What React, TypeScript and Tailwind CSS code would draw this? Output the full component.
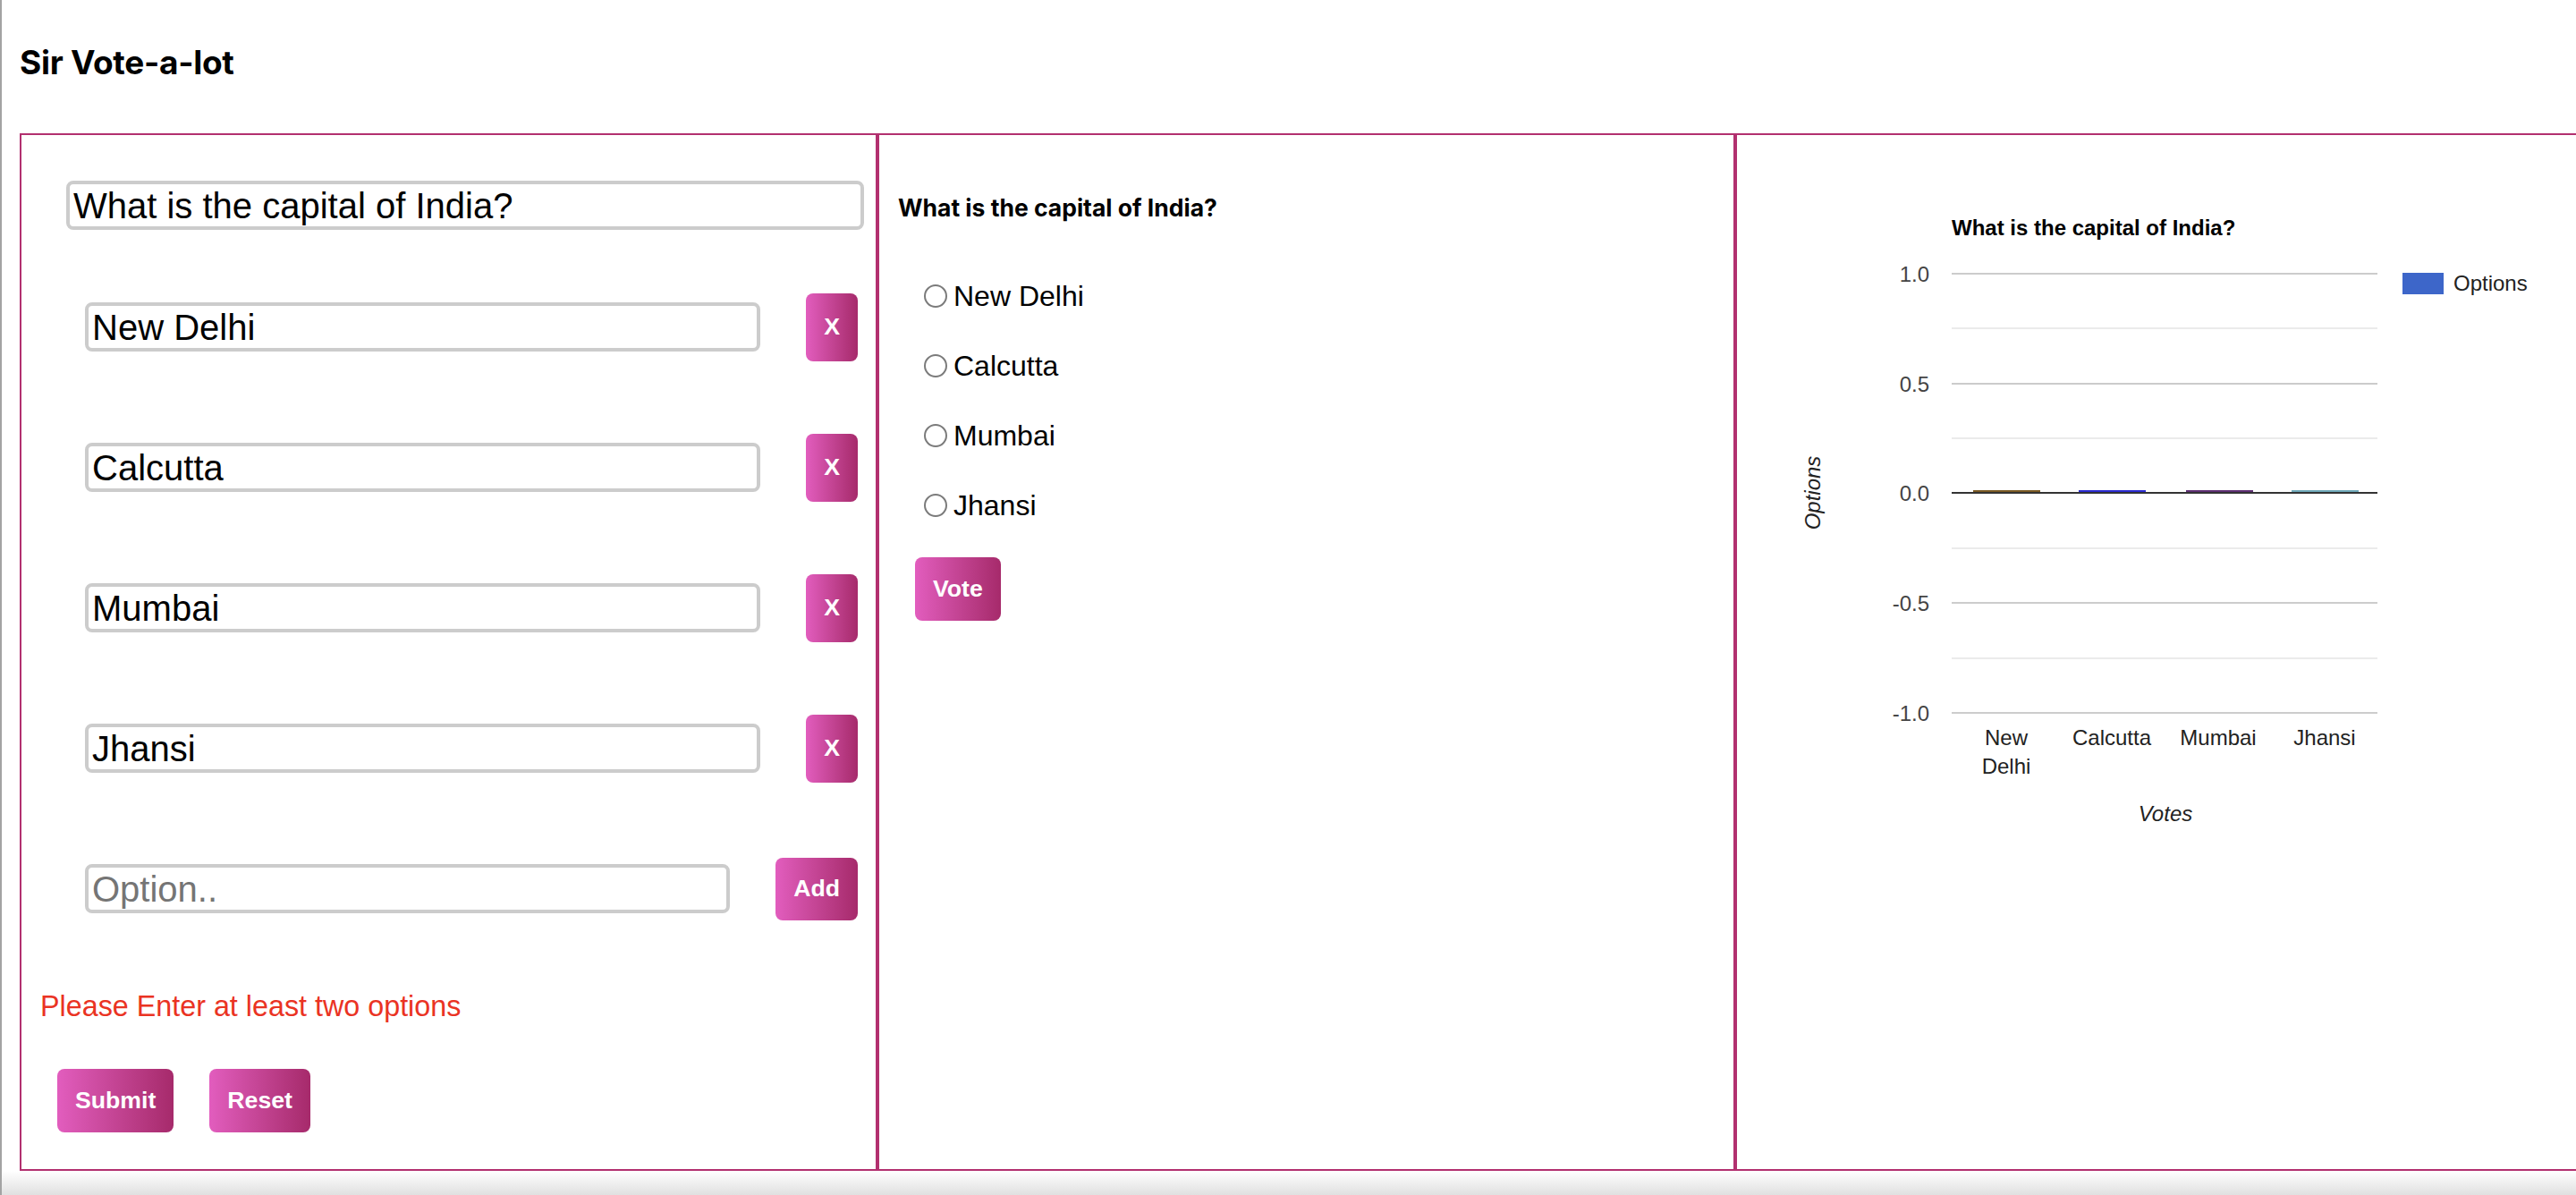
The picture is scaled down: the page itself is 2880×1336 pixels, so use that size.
import React from "react";

const options = ["New Delhi", "Calcutta", "Mumbai", "Jhansi"];

const sans = "font-['Liberation_Sans',Arial,Helvetica,sans-serif]";
const ui = "font-['Inter','Noto_Sans',sans-serif]";

const btn =
  "shrink-0 px-[20px] rounded-[8px] bg-linear-to-r from-[#e25dbe] to-[#a62a6b] text-white font-bold text-[26.67px] leading-[31px] " +
  sans;

const field =
  "box-border h-[55px] border-[4px] border-[#cccccc] rounded-[8px] px-[4px] text-[40px] text-black outline-none bg-white placeholder:text-[#757575] " +
  sans;

function Chart() {
  const grid = [155, 216, 278, 339, 400, 462, 523, 585, 646];
  const ticks = [
    { y: 155, label: "1.0" },
    { y: 278, label: "0.5" },
    { y: 400, label: "0.0" },
    { y: 523, label: "-0.5" },
    { y: 646, label: "-1.0" },
  ];
  const bars = [
    { x: 264, color: "#7a5a24" },
    { x: 382, color: "#2a2ad0" },
    { x: 502, color: "#5e2f72" },
    { x: 620, color: "#6fa9b9" },
  ];
  const font = "'Liberation Sans', Arial, sans-serif";

  return (
    <svg width="955" height="900" viewBox="0 0 955 900" className="block">
      <text x="240" y="112" fontFamily={font} fontSize="24" fontWeight="bold" fill="#000">
        What is the capital of India?
      </text>

      {grid.map((y, i) => (
        <rect
          key={y}
          x="240"
          y={y - 1}
          width="476"
          height="2"
          fill={i === 4 ? "#333333" : i % 2 === 0 ? "#cccccc" : "#ebebeb"}
        />
      ))}

      {bars.map((b) => (
        <rect key={b.x} x={b.x} y="397" width="75" height="2" fill={b.color} />
      ))}

      {ticks.map((t) => (
        <text
          key={t.label}
          x="215"
          y={t.y + 9}
          textAnchor="end"
          fontFamily={font}
          fontSize="24"
          fill="#444444"
        >
          {t.label}
        </text>
      ))}

      <g fontFamily={font} fontSize="24" fill="#222222" textAnchor="middle">
        <text x="301" y="682">New</text>
        <text x="301" y="714">Delhi</text>
        <text x="419" y="682">Calcutta</text>
        <text x="538" y="682">Mumbai</text>
        <text x="657" y="682">Jhansi</text>
        <text x="479" y="767" fontStyle="italic">
          Votes
        </text>
        <text x="93" y="400" fontStyle="italic" transform="rotate(-90 93 400)">
          Options
        </text>
      </g>

      <rect x="744" y="154" width="46" height="24" fill="#3d66c9" />
      <text x="801" y="174" fontFamily={font} fontSize="24" fill="#222222">
        Options
      </text>
    </svg>
  );
}

export default function App() {
  return (
    <div className="w-[2880px] h-[1336px] overflow-hidden bg-white border-l-2 border-[#a3a3a3] flex flex-col">
      <header className="h-[149px] shrink-0 pl-[20px] pt-[47px]">
        <h1 className={"text-[37px] leading-[45px] font-bold tracking-[-0.3px] text-black " + ui}>
          Sir Vote-a-lot
        </h1>
      </header>

      <div className="flex ml-[20px] w-[2877px] h-[1160px] shrink-0">
        {/* create poll */}
        <div className="w-[959px] h-full shrink-0 border-2 border-[#b2306f]">
          <input
            className={field + " mt-[51px] ml-[50px] w-[892px]"}
            defaultValue="What is the capital of India?"
          />

          <div className="mt-[30px] pl-[71px] pr-[20px]">
            {options.map((opt) => (
              <div key={opt} className="flex items-center h-[157px] gap-[51px]">
                <input className={field + " flex-1 min-w-0"} defaultValue={opt} />
                <button className={btn + " h-[76px]"}>X</button>
              </div>
            ))}
            <div className="flex items-center h-[157px] gap-[51px]">
              <input className={field + " flex-1 min-w-0"} placeholder="Option.." />
              <button className={btn + " h-[70px]"}>Add</button>
            </div>
          </div>

          <p className={"mt-[35px] ml-[21px] text-[32.3px] leading-[37px] text-[#ea3323] " + sans}>
            Please Enter at least two options
          </p>

          <div className="mt-[51px] ml-[40px] flex gap-[40px]">
            <button className={btn + " h-[71px]"}>Submit</button>
            <button className={btn + " h-[71px]"}>Reset</button>
          </div>
        </div>

        {/* vote */}
        <div className="w-[959px] h-full shrink-0 border-2 border-[#b2306f]">
          <h4 className={"mt-[65px] ml-[21px] text-[26.5px] leading-[32px] font-bold text-black " + ui}>
            What is the capital of India?
          </h4>

          <div className="mt-[44px]">
            {options.map((opt) => (
              <label key={opt} className="flex items-center h-[78px] pl-[50px] gap-[7px]">
                <input
                  type="radio"
                  name="poll"
                  className="appearance-none shrink-0 w-[26px] h-[26px] rounded-full border-2 border-[#7b7b7b] bg-white"
                />
                <span className={"text-[32px] leading-[37px] text-black " + sans}>{opt}</span>
              </label>
            ))}
          </div>

          <button className={btn + " h-[71px] mt-[19px] ml-[40px]"}>Vote</button>
        </div>

        {/* results */}
        <div className="w-[959px] h-full shrink-0 border-2 border-[#b2306f]">
          <Chart />
        </div>
      </div>

      <div className="flex-1 bg-linear-to-b from-white to-[#e0e0e0]" />
    </div>
  );
}
